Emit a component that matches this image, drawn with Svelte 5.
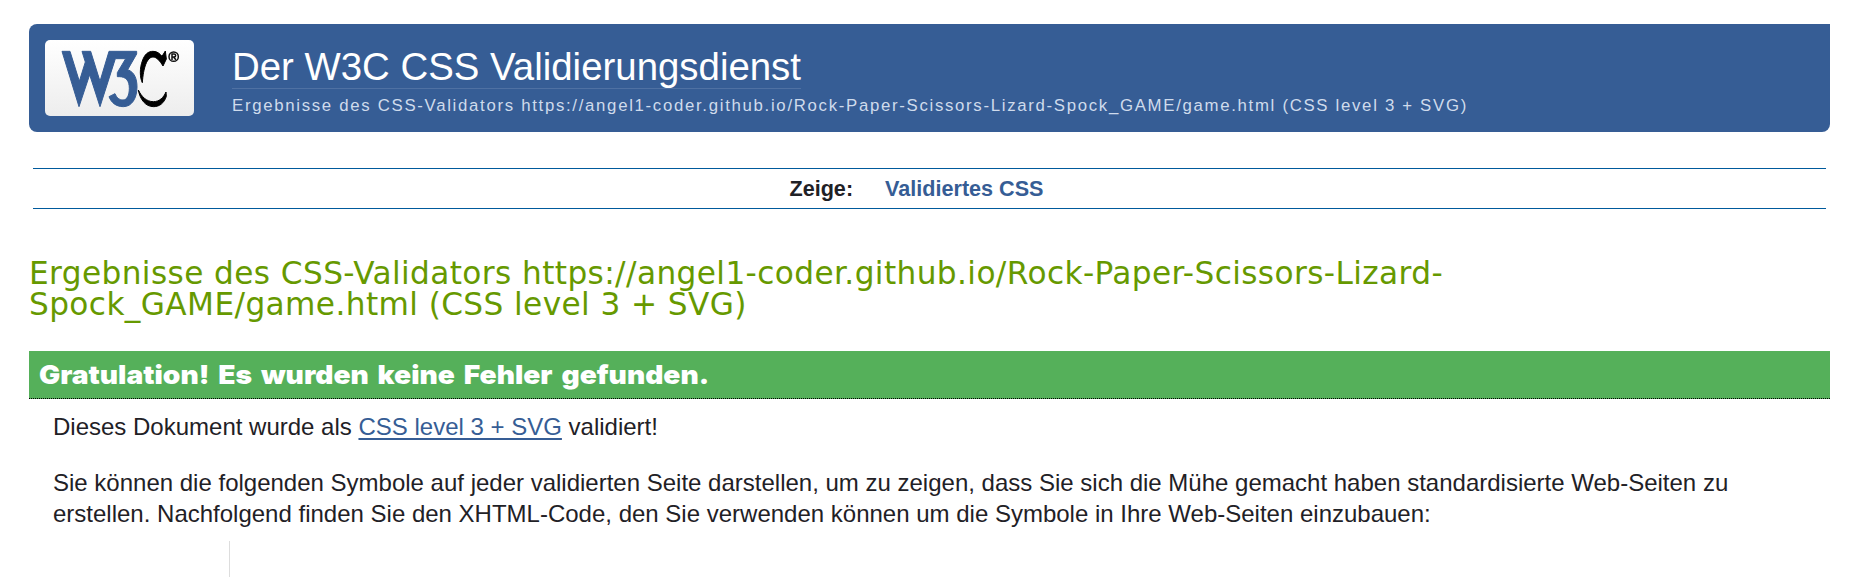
<script>
  const target = 'https://angel1-coder.github.io/Rock-Paper-Scissors-Lizard-Spock_GAME/game.html';
  const profile = 'CSS level 3 + SVG';
</script>

<header>
  <a class="logo" href="#w3c" aria-label="W3C">
    <svg viewBox="0 0 447 228" width="149" height="76" aria-hidden="true">
      <g transform="translate(39 18)">
        <path fill="#365d95" stroke="#365d95" stroke-width="3" d="M12 16H36L64 106L82 48L72 16H98L126 106L153 16H236V24L209 71C229 78 237 98 237 123C237 156 222 182 196 182C174 182 160 170 153 152L171 143C176 155 184 162 195 162C207 162 214 148 214 127C214 104 204 92 184 92H178V80L203 38H172L126 182L95 86L63 182Z" />
      </g>
      <g transform="translate(255 18)">
        <g stroke="#000" stroke-width="3">
          <path d="M106 15L109 39L99 60C90 45 80 33 69 33C51 33 40 65 37 110C29 94 29 66 37 45C44 24 55 16 69 16C83 16 90 24 96 31Z" />
          <path d="M25 132C34 151 49 167 70 167C89 167 101 154 108 138L109 151C102 172 88 182 71 182C46 182 30 160 25 132Z" />
        </g>
        <g fill="none" stroke="#111" stroke-width="4.500">
          <circle cx="131" cy="32" r="14" />
          <path d="M126 42V24H132Q137 24 137 28.500Q137 33 132 33H126M131 33L138 42" />
        </g>
      </g>
    </svg>
  </a>
  <div class="heading">
    <h1>Der W3C CSS Validierungsdienst</h1>
    <p>Ergebnisse des CSS-Validators {target} ({profile})</p>
  </div>
</header>

<nav>
  <strong>Zeige:</strong>
  <a href="#css">Validiertes CSS</a>
</nav>

<main>
  <h2>Ergebnisse des CSS-Validators {target} ({profile})</h2>
  <h3><span>Gratulation! Es wurden keine Fehler gefunden.</span></h3>
  <div class="text">
    <p>Dieses Dokument wurde als <a href="#profile">{profile}</a> validiert!</p>
    <p>Sie können die folgenden Symbole auf jeder validierten Seite darstellen, um zu zeigen, dass Sie sich die Mühe gemacht haben standardisierte Web-Seiten zu erstellen. Nachfolgend finden Sie den XHTML-Code, den Sie verwenden können um die Symbole in Ihre Web-Seiten einzubauen:</p>
  </div>
  <div class="badges"><div class="code"></div></div>
</main>

<style>
  :global(body) {
    background: #fff;
    overflow: hidden;
  }
  :global(#app) {
    box-sizing: border-box;
    height: 577px;
    overflow: hidden;
    padding: 24px 43px 0 29px;
    font: 24px/31px "Liberation Sans", Arial, sans-serif;
    color: #1f2126;
  }
  h1, h2, h3, p { margin: 0; font-weight: normal; }
  a { color: #365d95; }
  header {
    display: flex;
    box-sizing: border-box;
    height: 108px;
    padding: 16px 16px 0;
    gap: 38px;
    background: #365d95;
    border-radius: 8px 0 8px 8px;
  }
  .logo {
    width: 149px;
    height: 76px;
    border-radius: 5px;
    background: linear-gradient(#fff, #ededed);
  }
  .logo svg { display: block; }
  .heading {
    display: flex;
    flex-direction: column;
    align-items: flex-start;
    padding-top: 5px;
  }
  h1 {
    height: 43px;
    font-size: 38.4px;
    line-height: 44px;
    color: #fff;
    border-bottom: 1px solid #4f71a3;
    white-space: nowrap;
  }
  header p {
    padding-top: 7px;
    font-size: 16.8px;
    line-height: 20px;
    letter-spacing: 1.69px;
    color: #cfdbec;
    white-space: nowrap;
  }
  nav {
    display: flex;
    justify-content: center;
    gap: 32px;
    margin: 36px 4px 0;
    padding-right: 26px;
    border: solid #005a9c;
    border-width: 1px 0;
    height: 39px;
    font-size: 21.6px;
    line-height: 39px;
    font-weight: bold;
  }
  nav a { text-decoration: none; }
  h2 {
    margin-top: 49px;
    font: 31.2px/31px "DejaVu Sans", Verdana, sans-serif;
    letter-spacing: 0.39px;
    color: #690;
  }
  h3 {
    margin-top: 31px;
    padding-left: 10px;
    height: 47px;
    line-height: 47px;
    background: #55b05a;
    border-bottom: 1px dotted #000;
    color: #fff;
    font-family: "Arial Black", Inter, sans-serif;
    font-size: 26px;
    font-weight: 900;
  }
  h3 span {
    display: inline-block;
    word-spacing: 3px;
    transform: scaleX(1.083);
    transform-origin: left;
  }
  .text { padding: 12px 67px 0 24px; }
  .text p + p { margin-top: 25px; }
  .text a { text-decoration-thickness: 2px; text-underline-offset: 3px; }
  .badges {
    display: flex;
    padding: 12px 0 0 200px;
  }
  .code {
    border-left: 1px solid #ddd;
    height: 60px;
  }
</style>
